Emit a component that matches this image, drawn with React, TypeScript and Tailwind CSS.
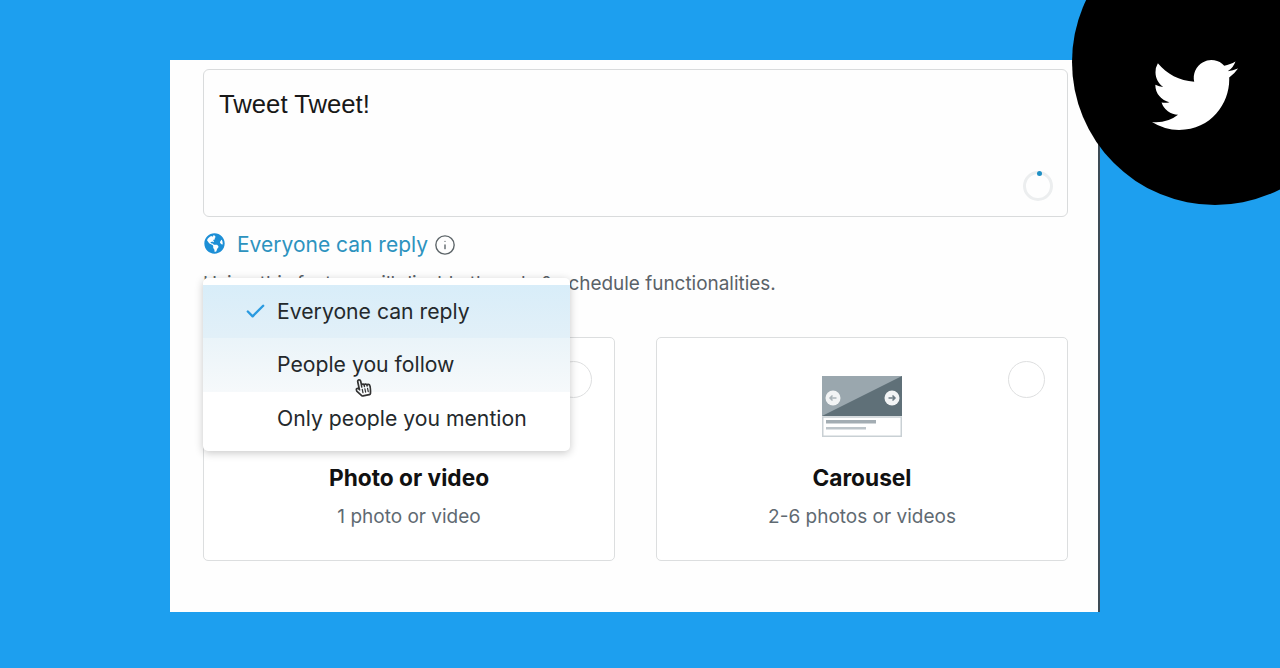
import React from 'react';
import { FaGlobeAmericas, FaRegHandPointer } from 'react-icons/fa';
import { Info, Check } from 'lucide-react';

function TwitterBird() {
    return (
        <svg viewBox="0 0 24 24" className="w-[86px] h-[86px] fill-white">
            <path d="M23.953 4.57a10 10 0 01-2.825.775 4.958 4.958 0 002.163-2.723c-.951.555-2.005.959-3.127 1.184a4.92 4.92 0 00-8.384 4.482C7.69 8.095 4.067 6.13 1.64 3.162a4.822 4.822 0 00-.666 2.475c0 1.71.87 3.213 2.188 4.096a4.904 4.904 0 01-2.228-.616v.06a4.923 4.923 0 003.946 4.827 4.996 4.996 0 01-2.212.085 4.936 4.936 0 004.604 3.417 9.867 9.867 0 01-6.102 2.105c-.39 0-.779-.023-1.17-.067a13.995 13.995 0 007.557 2.209c9.053 0 13.998-7.496 13.998-13.985 0-.21 0-.42-.015-.63A9.935 9.935 0 0024 4.59z" />
        </svg>
    );
}

function CarouselIcon() {
    return (
        <svg viewBox="0 0 80 61" className="w-[80px] h-[61px]">
            <rect x="0" y="0" width="80" height="40" fill="#9aa7ae" />
            <path d="M0 40 L80 0 V40 Z" fill="#5f7078" />
            <circle cx="11" cy="22" r="7.5" fill="#f2f4f5" />
            <circle cx="70" cy="22" r="7.5" fill="#f2f4f5" />
            <path d="M14.5 22 H8 M10.5 19.5 L8 22 L10.5 24.5" fill="none" stroke="#aab4b9" strokeWidth="1.5" />
            <path d="M66.5 22 H73 M70.5 19.5 L73 22 L70.5 24.5" fill="none" stroke="#6d7c84" strokeWidth="1.5" />
            <rect x="0.75" y="41" width="78.5" height="19.25" fill="#fff" stroke="#c9d0d4" strokeWidth="1.5" />
            <rect x="4" y="44" width="50" height="3.5" fill="#a3adb3" />
            <rect x="4" y="51" width="40" height="2.5" fill="#bcc4c9" />
        </svg>
    );
}

function OptionCard({ title, sub, icon }: { title: string; sub: string; icon?: React.ReactNode }) {
    return (
        <div className="relative flex-1 h-[224px] border border-[#dcdedf] rounded-[5px] bg-white flex flex-col items-center">
            <div className="h-[100px] mt-[38px] w-full flex justify-center">{icon}</div>
            <div className="absolute right-[22px] top-[23px] w-[37px] h-[37px] rounded-full border-[1.5px] border-[#dedfe0]" />
            <div className="text-[22.7px] leading-[28px] font-bold text-[#111] mt-[-12px]">{title}</div>
            <div className="text-[19px] leading-[26px] text-[#5f6a72] mt-[12px]">{sub}</div>
        </div>
    );
}

function ReplyMenu() {
    return (
        <div className="absolute left-[33px] top-[218px] w-[367px] pt-[7px] pb-[6px] bg-white rounded-[5px] shadow-[0_2px_8px_rgba(0,0,0,0.22)] text-[21.2px] text-[#24292c]">
            <div className="h-[53px] flex items-center bg-gradient-to-b from-[#d8edf9] to-[#e2f0f8]">
                <Check className="ml-[41px] w-[23px] h-[23px] text-[#2a9ae0]" strokeWidth={2.5} />
                <span className="ml-[10px]">Everyone can reply</span>
            </div>
            <div className="relative h-[54px] flex items-center bg-gradient-to-b from-[#eaf4f9] to-[#f6f9fb]">
                <span className="ml-[74px]">People you follow</span>
                <FaRegHandPointer className="absolute left-[152px] top-[39px] w-[16px] h-[21px] text-[#333] -rotate-12" />
            </div>
            <div className="h-[53px] flex items-center">
                <span className="ml-[74px]">Only people you mention</span>
            </div>
        </div>
    );
}

export default function App() {
    return (
        <div className="relative h-[668px] overflow-hidden bg-[#1d9fef] pt-[60px] pl-[170px] font-['Inter',sans-serif]">
            <div className="relative w-[930px] h-[552px] bg-[#fefefe] border-r-2 border-[#3d4b55] pl-[33px] pr-[30px] pt-[9px]">
                <div className="relative h-[148px] border border-[#d9dbdc] rounded-[6px] pl-[15px] pt-[18px] font-['Liberation_Sans',sans-serif] text-[25.7px] leading-[32px] text-[#181818]">
                    Tweet Tweet!
                    <div className="absolute right-[14px] bottom-[15px] w-[30px] h-[30px] rounded-full border-[3px] border-[#eceeef]" />
                    <div className="absolute right-[25px] top-[101px] w-[5px] h-[5px] rounded-full bg-[#1f8fc4]" />
                </div>
                <div className="flex items-center h-[24px] mt-[16px]">
                    <FaGlobeAmericas className="ml-[1px] w-[21px] h-[21px] text-[#1d8fd6] mt-[-4px]" />
                    <span className="ml-[12px] text-[21px] text-[#2d93bf]">Everyone can reply</span>
                    <Info className="ml-[6px] w-[22px] h-[22px] text-[#5c6468]" strokeWidth={1.5} />
                </div>
                <div className="mt-[15px] h-[24px] text-[18.93px] leading-[24px] text-[#5a6268] whitespace-nowrap">
                    Using this feature will disable the ads &amp; schedule functionalities.
                </div>
                <div className="flex gap-[41px] mt-[41px]">
                    <OptionCard title="Photo or video" sub="1 photo or video" />
                    <OptionCard title="Carousel" sub="2-6 photos or videos" icon={<CarouselIcon />} />
                </div>
                <ReplyMenu />
            </div>
            {/* corner badge */}
            <div className="absolute left-[1072px] top-[-81px] w-[286px] h-[286px] rounded-full bg-black flex items-center justify-center">
                <div className="mr-[40px] mt-[65px]">
                    <TwitterBird />
                </div>
            </div>
        </div>
    );
}
